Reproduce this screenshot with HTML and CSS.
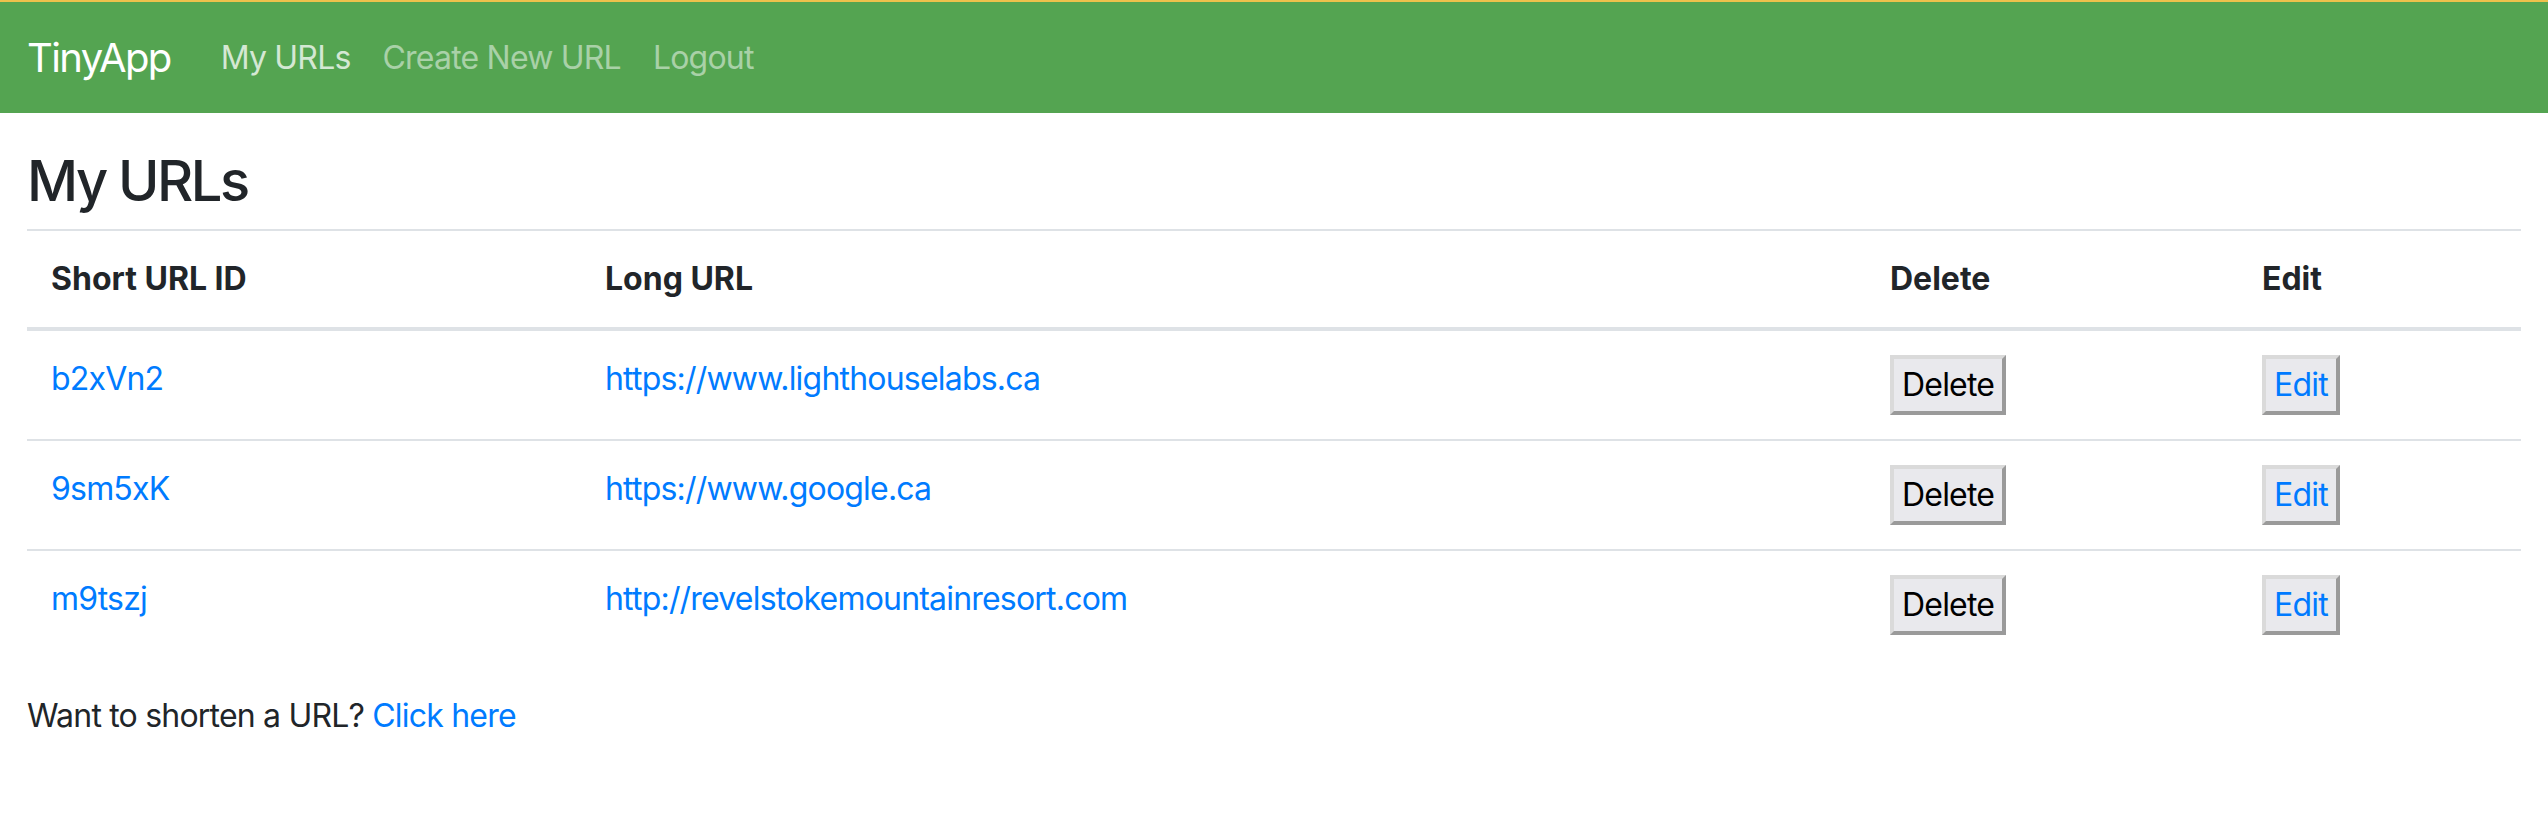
FILE: index.html
```html
<!DOCTYPE html>
<html lang="en">
<head>
<meta charset="utf-8">
<title>TinyApp</title>
<link rel="stylesheet" href="styles.css">
</head>
<body>
<nav class="navbar">
  <a class="brand" href="#">TinyApp</a>
  <a class="nav-link active" href="#">My URLs</a>
  <a class="nav-link" href="#">Create New URL</a>
  <a class="nav-link" href="#">Logout</a>
</nav>
<main class="content">
  <h3 class="title">My URLs</h3>
  <table class="url-table">
    <thead>
      <tr>
        <th class="c1">Short URL ID</th>
        <th class="c2">Long URL</th>
        <th class="c3">Delete</th>
        <th class="c4">Edit</th>
      </tr>
    </thead>
    <tbody>
      <tr>
        <td><a href="#">b2xVn2</a></td>
        <td><a href="#">https://www.lighthouselabs.ca</a></td>
        <td><button class="old-btn">Delete</button></td>
        <td><button class="old-btn link">Edit</button></td>
      </tr>
      <tr>
        <td><a href="#">9sm5xK</a></td>
        <td><a href="#">https://www.google.ca</a></td>
        <td><button class="old-btn">Delete</button></td>
        <td><button class="old-btn link">Edit</button></td>
      </tr>
      <tr>
        <td><a href="#">m9tszj</a></td>
        <td><a href="#">http://revelstokemountainresort.com</a></td>
        <td><button class="old-btn">Delete</button></td>
        <td><button class="old-btn link">Edit</button></td>
      </tr>
    </tbody>
  </table>
  <p class="footer-text">Want to shorten a URL? <a href="#">Click here</a></p>
</main>
</body>
</html>
```
FILE: styles.css
```css
* { box-sizing: border-box; }
html, body {
  margin: 0;
  padding: 0;
  background: #ffffff;
}
body {
  font-family: Inter, "Noto Sans", sans-serif;
  font-size: 32px;
  line-height: 48px;
  letter-spacing: -0.025em;
  color: #212529;
}
a {
  color: #007bff;
  text-decoration: none;
}
.navbar {
  display: flex;
  align-items: center;
  height: 113px;
  padding: 0 27px;
  background: #54a451;
  border-top: 2px solid #edc14c;
}
.brand {
  font-size: 40px;
  line-height: 60px;
  letter-spacing: -0.04em;
  color: #ffffff;
  margin-right: 34px;
}
.nav-link {
  padding: 0 16px;
  font-size: 32px;
  color: rgba(255, 255, 255, 0.5);
}
.nav-link.active {
  color: rgba(255, 255, 255, 0.75);
}
.content {
  padding: 0 27px;
}
.title {
  font-size: 56px;
  font-weight: 500;
  line-height: 67px;
  letter-spacing: -0.045em;
  margin: 35px 0 14px;
}
.url-table {
  width: 100%;
  border-collapse: collapse;
  table-layout: fixed;
}
.url-table th,
.url-table td {
  padding: 24px;
  text-align: left;
  vertical-align: top;
  border-top: 2px solid #dee2e6;
}
.url-table th {
  font-weight: 700;
  letter-spacing: 0;
  border-bottom: 4px solid #dee2e6;
}
.c1 { width: 554px; }
.c2 { width: 1285px; }
.c3 { width: 372px; }
.c4 { width: 283px; }
.old-btn {
  font-family: inherit;
  font-size: 32px;
  line-height: 48px;
  letter-spacing: -0.025em;
  height: 60px;
  padding: 2px 8px;
  margin: 0;
  color: #000000;
  background: #e9e9ed;
  border: 4px solid;
  border-color: #dadada #9a9a9a #9a9a9a #dadada;
  border-radius: 0;
  cursor: pointer;
}
.old-btn.link {
  color: #007bff;
}
.footer-text {
  margin: 33px 0 0;
}
```
